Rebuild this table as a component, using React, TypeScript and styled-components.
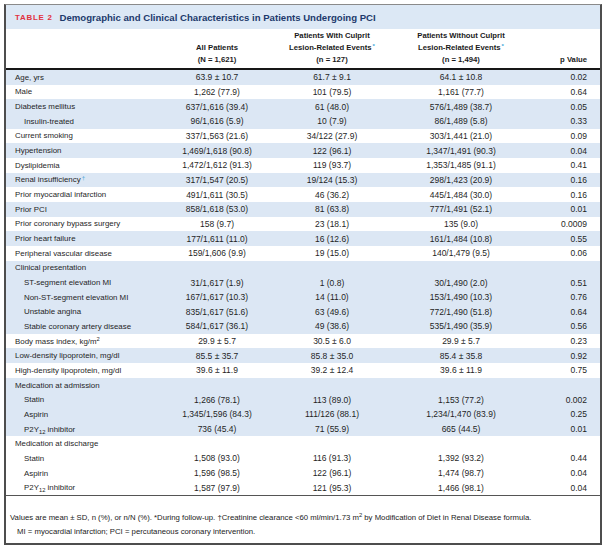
import React from "react"
import styled, { createGlobalStyle } from "styled-components"

const GlobalStyle = createGlobalStyle`
  html, body {
    margin: 0;
    padding: 0;
    background: #ffffff;
  }
  body {
    font-family: "Liberation Sans", Arial, sans-serif;
    color: #222222;
  }
`

const Frame = styled.div`
  margin: 4px 0 0 4px;
  width: 594px;
  border-top: 1px solid #8a8a8a;
  border-left: 2px solid #4d4d4d;
  border-right: 2px solid #4d4d4d;
  border-bottom: 2px solid #4d4d4d;
  background: #ffffff;
`

const TitleBar = styled.div`
  height: 24px;
  background: #dce8f5;
  display: flex;
  align-items: center;
  padding-left: 9px;
  gap: 7px;
  font-weight: 700;
`

const TableTag = styled.span`
  color: #e2323f;
  font-size: 7.9px;
  letter-spacing: 0.75px;
`

const TableTitle = styled.span`
  color: #1d3a6c;
  font-size: 9.6px;
`

const cols = "163px 96px 134px 124px 1fr"

const HeaderRow = styled.div`
  display: grid;
  grid-template-columns: ${cols};
  height: 37px;
  padding-bottom: 2px;
  align-items: end;
  border-bottom: 2px solid #161616;
  font-size: 7.7px;
  font-weight: 700;
  line-height: 12px;
  color: #1a1a1a;
`

const HeadCell = styled.div<{ $right?: boolean }>`
  text-align: ${(p) => (p.$right ? "right" : "center")};
  padding-right: ${(p) => (p.$right ? "13px" : "0")};
`

const Mark = styled.sup`
  color: #3aa3d9;
  font-size: 6px;
  vertical-align: 2px;
  line-height: 0;
  margin-left: 1px;
`

const Row = styled.div<{ $shade: boolean }>`
  display: grid;
  grid-template-columns: ${cols};
  height: 14.66px;
  align-items: center;
  background: ${(p) => (p.$shade ? "#dce7f4" : "#ffffff")};
  font-size: 8.5px;
  color: #1f1f1f;
`

const Label = styled.div<{ $indent: boolean }>`
  padding-left: ${(p) => (p.$indent ? "18px" : "9px")};
  font-size: 7.9px;
  white-space: nowrap;
`

const Cell = styled.div`
  text-align: center;
  white-space: nowrap;
`

const PCell = styled.div`
  text-align: right;
  padding-right: 13px;
`

const Sub = styled.sub`
  font-size: 5.8px;
  vertical-align: -1.5px;
  line-height: 0;
`

const Sup = styled.sup`
  font-size: 5.8px;
  vertical-align: 3px;
  line-height: 0;
`

const Foot = styled.div`
  border-top: 1px solid #555;
  height: 48px;
  box-sizing: border-box;
  padding: 15px 0 0 4px;
  font-size: 7.75px;
  line-height: 14px;
  color: #222;
`

const FootLine = styled.div<{ $indent?: boolean }>`
  padding-left: ${(p) => (p.$indent ? "7px" : "0")};
  white-space: nowrap;
`

type Item = {
  label: React.ReactNode
  vals?: [string, string, string, string]
  indent?: boolean
  shade: boolean
}

const p2y = (
  <>
    P2Y<Sub>12</Sub> inhibitor
  </>
)

const rows: Item[] = [
  { label: "Age, yrs", vals: ["63.9 ± 10.7", "61.7 ± 9.1", "64.1 ± 10.8", "0.02"], shade: true },
  { label: "Male", vals: ["1,262 (77.9)", "101 (79.5)", "1,161 (77.7)", "0.64"], shade: false },
  { label: "Diabetes mellitus", vals: ["637/1,616 (39.4)", "61 (48.0)", "576/1,489 (38.7)", "0.05"], shade: true },
  { label: "Insulin-treated", indent: true, vals: ["96/1,616 (5.9)", "10 (7.9)", "86/1,489 (5.8)", "0.33"], shade: true },
  { label: "Current smoking", vals: ["337/1,563 (21.6)", "34/122 (27.9)", "303/1,441 (21.0)", "0.09"], shade: false },
  { label: "Hypertension", vals: ["1,469/1,618 (90.8)", "122 (96.1)", "1,347/1,491 (90.3)", "0.04"], shade: true },
  { label: "Dyslipidemia", vals: ["1,472/1,612 (91.3)", "119 (93.7)", "1,353/1,485 (91.1)", "0.41"], shade: false },
  {
    label: (
      <>
        Renal insufficiency<Mark>†</Mark>
      </>
    ),
    vals: ["317/1,547 (20.5)", "19/124 (15.3)", "298/1,423 (20.9)", "0.16"],
    shade: true,
  },
  { label: "Prior myocardial infarction", vals: ["491/1,611 (30.5)", "46 (36.2)", "445/1,484 (30.0)", "0.16"], shade: false },
  { label: "Prior PCI", vals: ["858/1,618 (53.0)", "81 (63.8)", "777/1,491 (52.1)", "0.01"], shade: true },
  { label: "Prior coronary bypass surgery", vals: ["158 (9.7)", "23 (18.1)", "135 (9.0)", "0.0009"], shade: false },
  { label: "Prior heart failure", vals: ["177/1,611 (11.0)", "16 (12.6)", "161/1,484 (10.8)", "0.55"], shade: true },
  { label: "Peripheral vascular disease", vals: ["159/1,606 (9.9)", "19 (15.0)", "140/1,479 (9.5)", "0.06"], shade: false },
  { label: "Clinical presentation", shade: true },
  { label: "ST-segment elevation MI", indent: true, vals: ["31/1,617 (1.9)", "1 (0.8)", "30/1,490 (2.0)", "0.51"], shade: true },
  { label: "Non-ST-segment elevation MI", indent: true, vals: ["167/1,617 (10.3)", "14 (11.0)", "153/1,490 (10.3)", "0.76"], shade: true },
  { label: "Unstable angina", indent: true, vals: ["835/1,617 (51.6)", "63 (49.6)", "772/1,490 (51.8)", "0.64"], shade: true },
  { label: "Stable coronary artery disease", indent: true, vals: ["584/1,617 (36.1)", "49 (38.6)", "535/1,490 (35.9)", "0.56"], shade: true },
  {
    label: (
      <>
        Body mass index, kg/m<Sup>2</Sup>
      </>
    ),
    vals: ["29.9 ± 5.7", "30.5 ± 6.0", "29.9 ± 5.7", "0.23"],
    shade: false,
  },
  { label: "Low-density lipoprotein, mg/dl", vals: ["85.5 ± 35.7", "85.8 ± 35.0", "85.4 ± 35.8", "0.92"], shade: true },
  { label: "High-density lipoprotein, mg/dl", vals: ["39.6 ± 11.9", "39.2 ± 12.4", "39.6 ± 11.9", "0.75"], shade: false },
  { label: "Medication at admission", shade: true },
  { label: "Statin", indent: true, vals: ["1,266 (78.1)", "113 (89.0)", "1,153 (77.2)", "0.002"], shade: true },
  { label: "Aspirin", indent: true, vals: ["1,345/1,596 (84.3)", "111/126 (88.1)", "1,234/1,470 (83.9)", "0.25"], shade: true },
  { label: p2y, indent: true, vals: ["736 (45.4)", "71 (55.9)", "665 (44.5)", "0.01"], shade: true },
  { label: "Medication at discharge", shade: false },
  { label: "Statin", indent: true, vals: ["1,508 (93.0)", "116 (91.3)", "1,392 (93.2)", "0.44"], shade: false },
  { label: "Aspirin", indent: true, vals: ["1,596 (98.5)", "122 (96.1)", "1,474 (98.7)", "0.04"], shade: false },
  { label: p2y, indent: true, vals: ["1,587 (97.9)", "121 (95.3)", "1,466 (98.1)", "0.04"], shade: false },
]

const App = () => {
  return (
    <>
      <GlobalStyle />
      <Frame>
        <TitleBar>
          <TableTag>TABLE 2</TableTag>
          <TableTitle>Demographic and Clinical Characteristics in Patients Undergoing PCI</TableTitle>
        </TitleBar>
        <HeaderRow>
          <div />
          <HeadCell>
            All Patients
            <br />
            (N = 1,621)
          </HeadCell>
          <HeadCell>
            Patients With Culprit
            <br />
            Lesion-Related Events<Mark>*</Mark>
            <br />
            (n = 127)
          </HeadCell>
          <HeadCell>
            Patients Without Culprit
            <br />
            Lesion-Related Events<Mark>*</Mark>
            <br />
            (n = 1,494)
          </HeadCell>
          <HeadCell $right>p Value</HeadCell>
        </HeaderRow>
        {rows.map((r, i) => (
          <Row key={i} $shade={r.shade}>
            <Label $indent={!!r.indent}>{r.label}</Label>
            <Cell>{r.vals?.[0]}</Cell>
            <Cell>{r.vals?.[1]}</Cell>
            <Cell>{r.vals?.[2]}</Cell>
            <PCell>{r.vals?.[3]}</PCell>
          </Row>
        ))}
        <Foot>
          <FootLine>
            Values are mean ± SD, n (%), or n/N (%). *During follow-up. †Creatinine clearance &lt;60 ml/min/1.73 m
            <Sup>2</Sup> by Modification of Diet in Renal Disease formula.
          </FootLine>
          <FootLine $indent>MI = myocardial infarction; PCI = percutaneous coronary intervention.</FootLine>
        </Foot>
      </Frame>
    </>
  )
}

export default App
